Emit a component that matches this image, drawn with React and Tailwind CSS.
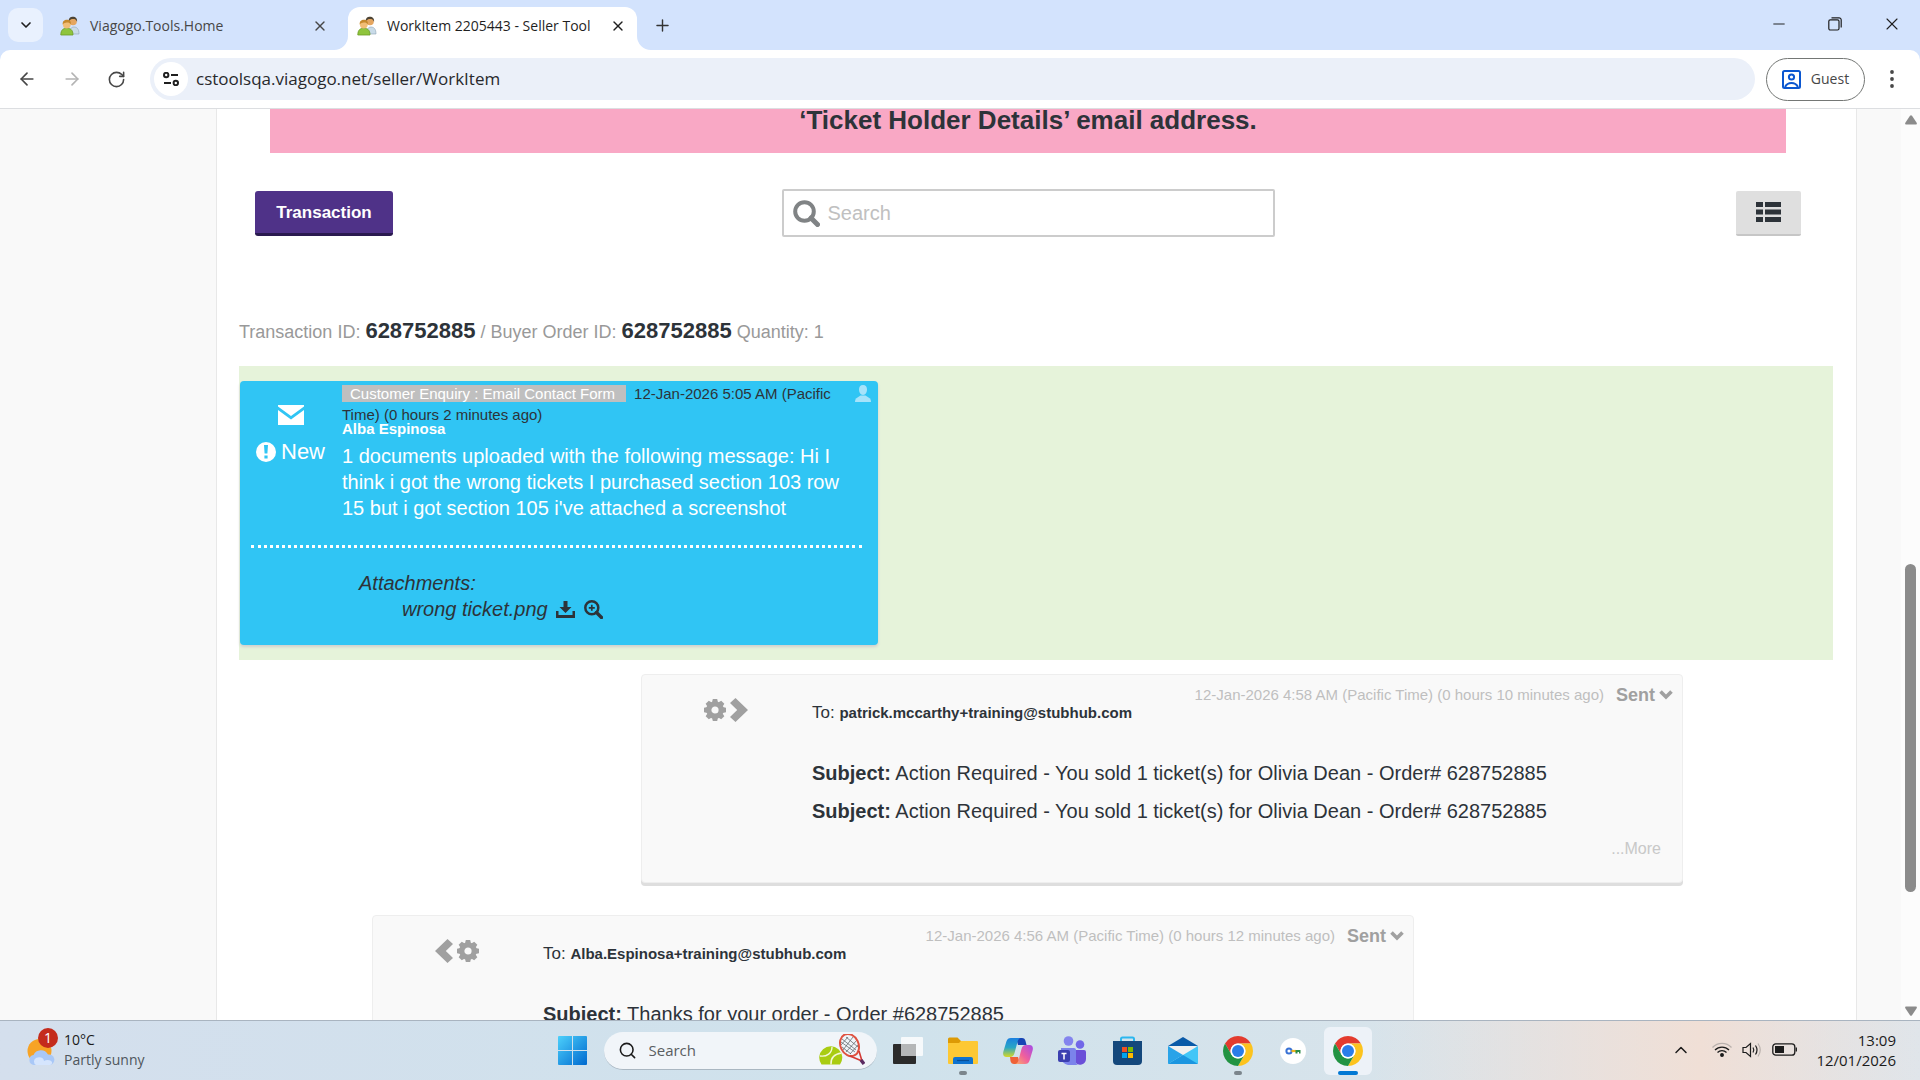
import React from "react";
import { useState } from "react";
import {
  ArrowLeft,
  ArrowRight,
  ChevronDown,
  ChevronUp,
  Minus,
  Plus,
  RotateCw,
  Search,
  X,
} from "lucide-react";

const TEETH = [0, 45, 90, 135, 180, 225, 270, 315];

const PeopleIcon = () => (
  <svg viewBox="0 0 20 20" className="w-5 h-5 shrink-0">
    <path d="M10 18c0-5 1-7 4-7s5 2 5 7z" fill="#c9dbe8" stroke="#8fa5b5" strokeWidth=".6" />
    <circle cx="13" cy="5.5" r="3.8" fill="#e5a660" />
    <path d="M8.8 5.5C8.5 2 10.500 .8 13 .8s4.500 1.500 4.100 5c-1-2.300-2.100-2.800-4-2.800s-2.800.5-4.300 2.500z" fill="#4d4435" />
    <path d="M.8 19c0-5 2.200-6.700 6-6.700s6.200 1.700 6.200 6.700z" fill="#8fc43c" stroke="#6c9c24" strokeWidth=".8" />
    <circle cx="6.800" cy="8.500" r="3.900" fill="#f1bd76" />
    <path d="M2.700 8.500C2.400 5.200 4.200 3.700 7 3.700s4.400 1.800 3.900 4.600c-1.500-1.600-2.600-2-4.200-1.700s-2.700.5-4 1.900z" fill="#c6892d" />
  </svg>
);

const GearIcon = ({ className }) => (
  <svg viewBox="0 0 22 22" className={className} fill="currentColor">
    <circle cx="11" cy="11" r="6.200" fill="none" stroke="currentColor" strokeWidth="5.200" />
    {TEETH.map((angle) => (
      <path key={angle} d="M8 3.500L8.800 0h4.400l.8 3.500z" transform={`rotate(${angle} 11 11)`} />
    ))}
  </svg>
);

const ChevronIcon = ({ left }) => (
  <svg viewBox="0 0 18 24" className="w-[18px] h-6" fill="currentColor">
    {left ? (
      <path d="M12.500 0L0 12l12.500 12 5.500-5L10.800 12 18 5z" />
    ) : (
      <path d="M5.500 0L18 12 5.500 24 0 19l7.200-7L0 5z" />
    )}
  </svg>
);

const ChromeIcon = () => (
  <svg viewBox="2 2 44 44" className="w-[30px] h-[30px]">
    <path d="M24 13H43.050A22 22 0 0 0 4.950 13L14.470 29.500A11 11 0 0 1 24 13z" fill="#e33b2e" />
    <path d="M43.050 13H24A11 11 0 0 1 33.530 29.500L24 46A22 22 0 0 0 43.050 13z" fill="#fcc31e" />
    <path d="M4.950 13L14.470 29.500A11 11 0 0 0 33.530 29.500L24 46A22 22 0 0 1 4.950 13z" fill="#229342" />
    <circle cx="24" cy="24" r="11" fill="#fff" />
    <circle cx="24" cy="24" r="8.800" fill="#2a7de9" />
  </svg>
);

const WindowsIcon = () => (
  <svg viewBox="0 0 29 29" className="w-[29px] h-[29px]">
    <defs>
      <linearGradient id="win" x1="0" y1="0" x2="1" y2="1">
        <stop offset="0" stopColor="#4cd0fb" />
        <stop offset="1" stopColor="#0069cf" />
      </linearGradient>
    </defs>
    <path
      d="M1 0h13v14H0V1a1 1 0 0 1 1-1zM15 0h13a1 1 0 0 1 1 1v13H15zM0 15h14v14H1a1 1 0 0 1-1-1zM15 15h14v13a1 1 0 0 1-1 1H15z"
      fill="url(#win)"
    />
  </svg>
);

const TennisIcon = () => (
  <svg viewBox="0 0 46 32" className="w-[46px] h-8 shrink-0">
    <g stroke="#555b60" strokeWidth=".7">
      <path d="M22 8l14 10M23 5l14 11M27 3l12 10M23 13l9 7M24 16L34 3M27 18L38 6M31 20l8-9M22 11l7-8" />
    </g>
    <ellipse cx="30.500" cy="11" rx="9" ry="11.500" transform="rotate(-25 30.500 11)" fill="none" stroke="#df5240" strokeWidth="2" />
    <path d="M31 22l12 5M40 17l3 10" stroke="#d33a34" strokeWidth="1.600" fill="none" />
    <path d="M42 26l3 4" stroke="#5b2b62" strokeWidth="3.500" />
    <path d="M2.500 30.500a11.500 11.500 0 1 1 18.500 0z" fill="#a9cc12" />
    <path d="M1 22c7 1 12-3 12-9M22.500 19c-7 1-11 5-10.500 11.500" stroke="#f4f8d8" strokeWidth="1.400" fill="none" />
  </svg>
);

const TaskViewIcon = () => (
  <svg viewBox="0 0 30 30" className="w-[30px] h-[30px]">
    <rect x="0" y="8" width="23" height="20" rx="1" fill="#2b2b2b" />
    <rect x="8" y="1" width="22" height="19" rx="1" fill="#fff" fillOpacity=".8" />
    <path d="M8 8h15v12H8z" fill="#b5b7b8" />
  </svg>
);

const FolderIcon = () => (
  <svg viewBox="0 0 30 28" className="w-[30px] h-7">
    <path d="M0 2a1.500 1.500 0 0 1 1.500-1.500h8L13 4v6H0z" fill="#dd9a05" />
    <path d="M0 6h11l2-2h16a1 1 0 0 1 1 1v21a1 1 0 0 1-1 1H1a1 1 0 0 1-1-1z" fill="#fdc834" />
    <path d="M5 27v-5a2 2 0 0 1 2-2h16a2 2 0 0 1 2 2v5z" fill="#0f73d0" />
    <path d="M9 23.500h12" stroke="#084e96" strokeWidth="1.200" />
  </svg>
);

const CopilotIcon = () => (
  <svg viewBox="0 0 30 28" className="w-[30px] h-7">
    <defs>
      <linearGradient id="cpa" x1="0" y1="0" x2="0" y2="1">
        <stop offset="0" stopColor="#1a80e0" />
        <stop offset=".5" stopColor="#29a6c5" />
        <stop offset="1" stopColor="#d8d824" />
      </linearGradient>
      <linearGradient id="cpb" x1="1" y1="0" x2="0" y2="1">
        <stop offset="0" stopColor="#a44be8" />
        <stop offset=".55" stopColor="#f0609c" />
        <stop offset="1" stopColor="#fbb168" />
      </linearGradient>
    </defs>
    <path d="M13 1h6c2 0 3 1 3.500 3l1 4H15z" fill="#1744b4" />
    <path d="M7 20h8l2 7h-6c-2 0-3-1-3.500-3z" fill="#ef6238" />
    <path d="M8 1h10c-2 0-3 2-3.500 4l-3 11c-.7 2.500-2 4-4.500 4H3.500C.5 20-.4 17.500.4 14.500l3-10C4.200 2 5.500 1 8 1z" fill="url(#cpa)" />
    <path d="M22 27H12c2 0 3-2 3.500-4l3-11c.7-2.500 2-4 4.500-4h3.500c3 0 3.900 2.500 3.100 5.500l-3 10C25.800 26 24.500 27 22 27z" fill="url(#cpb)" />
  </svg>
);

const TeamsIcon = () => (
  <svg viewBox="0 0 29 30" className="w-[29px] h-[30px]">
    <circle cx="22" cy="8.500" r="4.300" fill="#7267e8" />
    <circle cx="10.500" cy="5" r="4.800" fill="#8484ee" />
    <path d="M17 14h9a2 2 0 0 1 2 2v7a6 6 0 0 1-11 3z" fill="#6a4fd8" />
    <path d="M3 12h13a2 2 0 0 1 2 2v12a3 3 0 0 0 3 3H10a8 8 0 0 1-7-8z" fill="#7b83eb" />
    <rect x="0" y="14" width="12" height="12" rx="2" fill="#3b3fb0" />
    <path d="M3.500 17.500h5M6 17.500v6" stroke="#fff" strokeWidth="1.500" />
  </svg>
);

const StoreIcon = () => (
  <svg viewBox="0 0 29 30" className="w-[29px] h-[30px]">
    <path d="M8 7V3a1.500 1.500 0 0 1 1.500-1.500h10A1.500 1.500 0 0 1 21 3v4" fill="none" stroke="#2cb7ef" strokeWidth="2" />
    <path d="M0 5h29v20a4 4 0 0 1-4 4H4a4 4 0 0 1-4-4z" fill="#14487c" />
    <path d="M9 11h5v5H9z" fill="#f25022" />
    <path d="M15 11h5v5h-5z" fill="#7fba00" />
    <path d="M9 17h5v5H9z" fill="#00a4ef" />
    <path d="M15 17h5v5h-5z" fill="#ffb900" />
  </svg>
);

const MailIcon = () => (
  <svg viewBox="0 0 30 29" className="w-[30px] h-[29px]">
    <path d="M0 10L15 1l15 9z" fill="#0a5aa8" />
    <path d="M2 10h26v12H2z" fill="#f0f0f0" />
    <path d="M0 10l15 9-15 9z" fill="#28a3e8" />
    <path d="M30 10L0 28h29a1 1 0 0 0 1-1z" fill="#42c6f7" />
    <path d="M0 28l15-9 15 9z" fill="#1b96e0" />
  </svg>
);

const KeyIcon = () => (
  <svg viewBox="0 0 26 26" className="w-[26px] h-[26px]">
    <circle cx="13" cy="13" r="13" fill="#fff" />
    <circle cx="9" cy="13" r="2.600" fill="none" stroke="#3972d5" strokeWidth="2" />
    <path d="M11.500 13H16" stroke="#f0b51f" strokeWidth="2.200" />
    <path d="M15.500 12h5v3.500h-1.500V14h-1.500v1.500h-2z" fill="#2c8c46" />
  </svg>
);

const WeatherIcon = () => (
  <svg viewBox="0 0 28 28" className="w-7 h-7">
    <circle cx="12.500" cy="13" r="12" fill="#f7a325" />
    <path d="M7 27a5 5 0 0 1-.5-9.900A8 8 0 0 1 21 16.500 5.300 5.300 0 0 1 23 27z" fill="#a9c8f7" />
    <path d="M9 27a4 4 0 0 1 0-7c4-2 8 0 8 3 3-2 7-1 8 1 .5 2-1 3-2 3z" fill="#d5e5fd" />
  </svg>
);

const BrowserTab = ({ title, active }) => (
  <div
    className={`relative flex items-center h-[43px] rounded-t-[12px] pl-[9px] pb-1.5 ${
      active ? "w-[289px] bg-white text-[#1f1f1f]" : "w-[288px] text-[#474747]"
    }`}
  >
    {active && (
      <>
        <svg viewBox="0 0 14 14" className="absolute -left-3.5 bottom-0 w-3.5 h-3.5">
          <path d="M14 0v14H0A14 14 0 0 0 14 0z" fill="#fff" />
        </svg>
        <svg viewBox="0 0 14 14" className="absolute -right-3.5 bottom-0 w-3.5 h-3.5">
          <path d="M0 0v14h14A14 14 0 0 1 0 0z" fill="#fff" />
        </svg>
      </>
    )}
    <PeopleIcon />
    <span className="flex-1 ml-[10px] text-sm whitespace-nowrap">{title}</span>
    <button aria-label="Close tab" className="mr-[11px]">
      <X size={16} strokeWidth={2} />
    </button>
  </div>
);

const MessageCard = ({ date, to, subjects, incoming, more, className }) => (
  <article
    className={`w-[1042px] h-[209px] bg-[#f9f9f9] border border-[#eee] rounded shadow-[0_3px_0_#dedede] flex flex-col ${className}`}
  >
    <div className="flex justify-end items-center h-10 pr-[9px] text-[#a0a0a0]">
      <time className="text-[15px] text-[#bfbfbf]">{date}</time>
      <button className="flex items-center ml-3 text-[18px] font-bold">
        Sent
        <svg viewBox="0 0 14 10" className="w-3.5 h-2.5 ml-1">
          <path d="M1.500 1.500L7 7l5.500-5.500" fill="none" stroke="currentColor" strokeWidth="3.600" />
        </svg>
      </button>
    </div>
    <div className="flex flex-1 -mt-5">
      <div className="w-[170px] pl-[62px] pt-[3px] text-[#a0a0a0]">
        <button aria-label="Message options" className="flex items-center gap-1">
          {incoming && <ChevronIcon left />}
          <GearIcon className="w-[22px] h-[22px]" />
          {!incoming && <ChevronIcon />}
        </button>
      </div>
      <div className="pt-1.5">
        <p className="text-[17px] leading-6">
          To: <span className="text-[15px] font-bold">{to}</span>
        </p>
        <div className="mt-[29px]">
          {subjects.map((subject, i) => (
            <p key={i} className="text-[20px] leading-[38px] whitespace-nowrap">
              <b>Subject:</b> {subject}
            </p>
          ))}
        </div>
      </div>
    </div>
    {more && (
      <a href="#more" className="self-end mr-[21px] mb-[21px] text-base leading-6 text-[#c8c8c8]">
        ...More
      </a>
    )}
  </article>
);

const TaskButton = ({ label, running, active, children }) => (
  <button
    aria-label={label}
    className={`relative flex items-center justify-center w-12 h-12 rounded-md ${
      active && "bg-[#edf2f8]"
    }`}
  >
    {children}
    {running && <span className="absolute bottom-0 w-2 h-1 rounded-full bg-[#7b858c]" />}
    {active && <span className="absolute bottom-0 w-5 h-1 rounded-full bg-[#0078d4]" />}
  </button>
);

const App = () => {
  const [url, setUrl] = useState("cstoolsqa.viagogo.net/seller/WorkItem");
  const [query, setQuery] = useState("");

  return (
    <div className="h-screen flex flex-col overflow-hidden bg-white font-['Liberation_Sans',Arial,sans-serif] text-[#2d3339]">
      {/* browser tabs */}
      <header className="bg-[#d3e3fd] font-['Open_Sans',sans-serif]">
        <div className="flex items-end h-[50px] pl-2">
          <button
            aria-label="Search tabs"
            className="flex items-center justify-center w-[35px] h-[34px] mb-2 mr-2 rounded-[10px] bg-[#e9f1fe] text-[#1f1f1f]"
          >
            <ChevronDown size={16} strokeWidth={2.500} />
          </button>
          <div className="flex-1 flex items-end">
            <BrowserTab title="Viagogo.Tools.Home" />
            <div className="ml-[9px]">
              <BrowserTab title="WorkItem 2205443 - Seller Tool" active />
            </div>
            <button aria-label="New tab" className="ml-4 mb-[15px] text-[#333]">
              <Plus size={19} strokeWidth={1.800} />
            </button>
          </div>
          <div className="flex items-center gap-10 pr-[18px] mb-4 text-[#1f1f1f]">
            <button aria-label="Minimize">
              <Minus size={18} strokeWidth={1.300} />
            </button>
            <button aria-label="Restore">
              <svg viewBox="0 0 14 14" className="w-3.5 h-3.5" fill="none" stroke="currentColor" strokeWidth="1.200">
                <rect x=".8" y="2.800" width="10.200" height="10.200" rx="1.500" />
                <path d="M3.500.8h7.500a2.200 2.200 0 0 1 2.200 2.200v7.500" />
              </svg>
            </button>
            <button aria-label="Close">
              <X size={20} strokeWidth={1.300} />
            </button>
          </div>
        </div>
        {/* address bar */}
        <div className="flex items-center h-[59px] rounded-t-[10px] bg-white border-b border-[#dcdee1] text-[#474747]">
          <div className="flex items-center gap-[25px] pl-[17px]">
            <button aria-label="Back">
              <ArrowLeft size={20} strokeWidth={2} />
            </button>
            <button aria-label="Forward" className="text-[#b4b4b4]">
              <ArrowRight size={20} strokeWidth={2} />
            </button>
            <button aria-label="Reload">
              <RotateCw size={19} strokeWidth={2} />
            </button>
          </div>
          <div className="flex-1 flex items-center h-[42px] ml-6 rounded-full bg-[#ebf0f9]">
            <button
              aria-label="Site information"
              className="flex items-center justify-center w-[34px] h-[34px] ml-1 rounded-full bg-white text-[#1f1f1f]"
            >
              <svg viewBox="0 0 16 14" className="w-4 h-3.5" fill="none" stroke="currentColor" strokeWidth="2">
                <circle cx="3.200" cy="3" r="2.200" />
                <path d="M8 3h7M1 11h7" />
                <circle cx="12.800" cy="11" r="2.200" />
              </svg>
            </button>
            <label htmlFor="url" className="sr-only">
              Address
            </label>
            <input
              type="text"
              id="url"
              value={url}
              onChange={(e) => setUrl(e.target.value)}
              className="flex-1 ml-2 bg-transparent text-[17px] text-[#28292c] outline-none"
            />
          </div>
          <button className="flex items-center justify-center w-[99px] h-[43px] ml-[11px] border border-[#747775] rounded-full text-sm gap-2.5">
            <svg viewBox="0 0 19 19" className="w-[19px] h-[19px]" fill="none" stroke="#0b57d0" strokeWidth="2">
              <rect x="1" y="1" width="17" height="17" rx="1.500" />
              <circle cx="9.500" cy="7" r="2.600" />
              <path d="M3 17c1.500-3 3.500-4 6.500-4s5 1 6.500 4" />
            </svg>
            Guest
          </button>
          <button aria-label="Menu" className="ml-[25px] mr-[26px]">
            <svg viewBox="0 0 4 18" className="w-1 h-[18px]" fill="currentColor">
              <circle cx="2" cy="2" r="1.900" />
              <circle cx="2" cy="9" r="1.900" />
              <circle cx="2" cy="16" r="1.900" />
            </svg>
          </button>
        </div>
      </header>

      {/* page */}
      <div className="flex-1 min-h-0 flex bg-[#f9f9f9]">
        <main className="flex-1 ml-[216px] mr-11 pl-[22px] pr-[23px] bg-white border-x border-[#e8e8e8] overflow-hidden">
          <div className="mx-[31px] mr-[47px] h-11 bg-[#f9a8c5] text-center">
            <h1 className="text-[26px] leading-[22px] font-bold">‘Ticket Holder Details’ email address.</h1>
          </div>

          <div className="flex items-center justify-between mt-9 pl-4 pr-8 h-12">
            <button className="w-[138px] h-[45px] pt-0.5 rounded-[3px] bg-[#4f3288] border-b-3 border-[#2a1a4f] text-[17px] font-bold text-white">
              Transaction
            </button>
            <div className="flex items-center w-[493px] h-12 px-[9px] border-2 border-[#ccc] rounded-xs mr-[73px]">
              <svg viewBox="0 0 27 27" className="w-[27px] h-[27px]" fill="none" stroke="#808385">
                <circle cx="11.500" cy="11.500" r="9.300" strokeWidth="4" />
                <path d="M18 18l6.500 6.500" strokeWidth="5" strokeLinecap="round" />
              </svg>
              <label htmlFor="search" className="sr-only">
                Search
              </label>
              <input
                type="text"
                id="search"
                value={query}
                onChange={(e) => setQuery(e.target.value)}
                placeholder="Search"
                className="flex-1 ml-2 text-[20px] placeholder:text-[#c0c0c0] outline-none"
              />
            </div>
            <button
              aria-label="List view"
              className="flex items-center justify-center w-[65px] h-[45px] rounded-xs bg-[#dfdfdf] border-b-2 border-[#c6c6c6]"
            >
              <svg viewBox="0 0 25 20" className="w-[25px] h-5" fill="currentColor">
                <path d="M0 0h7v5H0zM9 0h16v5H9zM0 7.500h7v5H0zM9 7.500h16v5H9zM0 15h7v5H0zM9 15h16v5H9z" />
              </svg>
            </button>
          </div>

          <p className="mt-20 text-[18px] leading-7 text-[#999]">
            Transaction ID: <b className="text-[22px] text-[#2d3339]">628752885</b> / Buyer Order ID:{" "}
            <b className="text-[22px] text-[#2d3339]">628752885</b> Quantity: 1
          </p>

          <section className="mt-5 py-[15px] bg-[#e6f3da]">
            <article className="w-2/5 h-[264px] ml-px rounded bg-[#30c5f4] shadow-[0_2px_3px_#cfd0cf]">
              <div className="flex pt-1">
                <div className="w-[102px] pt-5 text-white">
                  <svg viewBox="0 0 26 20" className="w-[26px] h-5 mx-auto" fill="currentColor">
                    <path d="M0 0h26v1.500L13 11 0 1.500zM0 5l13 9.500L26 5v15H0z" />
                  </svg>
                  <div className="flex items-center mt-[13px] pl-4 gap-[5px] text-[22px] leading-7">
                    <svg viewBox="0 0 20 20" className="w-5 h-5" fill="currentColor">
                      <circle cx="10" cy="10" r="10" />
                      <path d="M8 3h4l-.6 8.500H8.600zM8.400 13.500h3.200v3H8.400z" fill="#30c5f4" />
                    </svg>
                    New
                  </div>
                </div>
                <div className="flex-1">
                  <div className="w-[510px] text-[15px] leading-[21px] -mt-0.5">
                    <span className="pl-2 pr-[11px] mr-2 bg-[#bfbfbf] text-white">
                      Customer Enquiry : Email Contact Form
                    </span>
                    12-Jan-2026 5:05 AM (Pacific Time) (0 hours 2 minutes ago)
                  </div>
                  <h2 className="-mt-1 text-[15px] leading-4 font-bold text-white">Alba Espinosa</h2>
                  <p className="mt-1.5 w-[510px] text-[20px] leading-[26px] text-white">
                    1 documents uploaded with the following message: Hi I think i got the wrong tickets I
                    purchased section 103 row 15 but i got section 105 i've attached a screenshot
                  </p>
                </div>
                <svg viewBox="0 0 16 17" className="w-4 h-[17px] mr-[7px]" fill="#a6e3fa">
                  <path d="M8 0c2.800 0 4 1.800 4 4.500S10.500 10 8 10 4 7.200 4 4.500 5.200 0 8 0z" />
                  <path d="M5.500 10.500h5L15 13.500q1 1 1 3.500H0q0-2.500 1-3.500z" />
                </svg>
              </div>
              <hr className="mt-6 ml-[11px] mr-4 border-t-3 border-dotted border-white" />
              <div className="mt-[22px] pl-[119px] text-[20px] leading-[26px] italic">
                <p>Attachments:</p>
                <div className="flex items-center pl-[43px]">
                  wrong ticket.png
                  <button aria-label="Download" className="ml-2">
                    <svg viewBox="0 0 19 17" className="w-[19px] h-[17px]" fill="currentColor">
                      <path d="M7.500 0h4v6h4l-6 6-6-6h4z" />
                      <path d="M0 10h2.500v4h14v-4H19v7H0z" />
                    </svg>
                  </button>
                  <button aria-label="Zoom in" className="ml-[9px]">
                    <svg viewBox="0 0 19 19" className="w-[19px] h-[19px]" fill="none" stroke="currentColor">
                      <circle cx="7.800" cy="7.800" r="6.500" strokeWidth="2.500" />
                      <path d="M12.500 12.500l5 5" strokeWidth="3.400" strokeLinecap="round" />
                      <path d="M7.800 4.800v6M4.800 7.800h6" strokeWidth="1.700" />
                    </svg>
                  </button>
                </div>
              </div>
            </article>
          </section>

          <MessageCard
            className="mt-3.5 ml-auto mr-[150px]"
            date="12-Jan-2026 4:58 AM (Pacific Time) (0 hours 10 minutes ago)"
            to="patrick.mccarthy+training@stubhub.com"
            subjects={[
              "Action Required - You sold 1 ticket(s) for Olivia Dean - Order# 628752885",
              "Action Required - You sold 1 ticket(s) for Olivia Dean - Order# 628752885",
            ]}
            more
          />
          <MessageCard
            className="mt-8 ml-[133px]"
            date="12-Jan-2026 4:56 AM (Pacific Time) (0 hours 12 minutes ago)"
            to="Alba.Espinosa+training@stubhub.com"
            subjects={["Thanks for your order - Order #628752885"]}
            incoming
          />
        </main>

        {/* scrollbar */}
        <div className="flex flex-col items-center w-[19px] pt-1.5 pb-1 bg-[#fcfcfc]">
          <svg viewBox="0 0 12 10" className="w-3 h-2.5" fill="#8b8b8b">
            <path d="M5 .8q1-1 2 0l4.500 6.700Q12.500 9.500 11 9.500H1Q-.5 9.500.5 7.500z" />
          </svg>
          <div className="w-[11px] h-[328px] mt-auto rounded-full bg-[#8b8b8b]" />
          <svg viewBox="0 0 12 10" className="w-3 h-2.5 mt-[114px]" fill="#8b8b8b">
            <path d="M5 9.200q1 1 2 0l4.500-6.700Q12.500.5 11 .5H1Q-.5.5.5 2.500z" />
          </svg>
        </div>
      </div>

      {/* taskbar */}
      <footer className="grid grid-cols-[1fr_auto_1fr] items-center h-[60px] border-t border-[#a9b4c0] bg-linear-to-r from-[#d4dfed] via-[#cfe2ec] via-45% to-[#e0e5ea] font-['Open_Sans',sans-serif] text-[#1b1b1b]">
        <div className="flex items-center pl-[27px] pb-0.5">
          <div className="relative pt-1">
            <WeatherIcon />
            <span className="absolute -top-1.5 left-[11px] w-5 h-5 rounded-full bg-[#c42b1c] text-center text-white text-sm leading-5">
              1
            </span>
          </div>
          <div className="ml-[9px] text-sm leading-5">
            <p>10°C</p>
            <p className="text-[#4f565c]">Partly sunny</p>
          </div>
        </div>
        <div className="flex items-center gap-[7px]">
          <button aria-label="Start" className="flex items-center justify-center w-12 h-12">
            <WindowsIcon />
          </button>
          <div className="flex items-center w-[273px] h-[38px] pl-3.5 pr-3 rounded-full bg-[#f1f5f9] border-b border-[#aab7c2]">
            <Search size={19} strokeWidth={2} />
            <label htmlFor="taskbar-search" className="sr-only">
              Search
            </label>
            <input
              type="text"
              id="taskbar-search"
              placeholder="Search"
              className="flex-1 min-w-0 ml-3 bg-transparent text-[15px] placeholder:text-[#5a5e61] outline-none"
            />
            <TennisIcon />
          </div>
          <TaskButton label="Task view">
            <TaskViewIcon />
          </TaskButton>
          <TaskButton label="File Explorer" running>
            <FolderIcon />
          </TaskButton>
          <TaskButton label="Copilot">
            <CopilotIcon />
          </TaskButton>
          <TaskButton label="Teams">
            <TeamsIcon />
          </TaskButton>
          <TaskButton label="Microsoft Store">
            <StoreIcon />
          </TaskButton>
          <TaskButton label="Mail">
            <MailIcon />
          </TaskButton>
          <TaskButton label="Chrome" running>
            <ChromeIcon />
          </TaskButton>
          <TaskButton label="Passwords">
            <KeyIcon />
          </TaskButton>
          <TaskButton label="Chrome" active>
            <ChromeIcon />
          </TaskButton>
        </div>
        <div className="flex items-center justify-end h-full pr-6 pb-0.5 bg-linear-to-r from-transparent via-[#f0dfd6] via-60% to-transparent">
          <button aria-label="Show hidden icons" className="mr-[21px]">
            <ChevronUp size={20} strokeWidth={1.800} />
          </button>
          <svg viewBox="0 0 20 15" className="w-5 h-[15px] mr-2.5" fill="none" stroke="currentColor" strokeWidth="1.300">
            <path d="M.5 5.500a13 13 0 0 1 19 0" stroke="#b9b1ad" />
            <path d="M3 8a9.800 9.800 0 0 1 14 0M5.500 10.500a6.300 6.300 0 0 1 9 0" />
            <circle cx="10" cy="13" r="1.300" fill="currentColor" />
          </svg>
          <svg viewBox="0 0 20 16" className="w-5 h-4 mr-2.5" fill="none" stroke="currentColor" strokeWidth="1.200">
            <path d="M1 5.500h3L8.500 1.500v13L4 10.500H1z" />
            <path d="M11 5.500q1.600 2.500 0 5M13.500 3.500q3 4.500 0 9" />
            <path d="M16 1.500q4.500 6.500 0 13" stroke="#b9b1ad" />
          </svg>
          <svg viewBox="0 0 25 13" className="w-[25px] h-[13px]" fill="none" stroke="currentColor" strokeWidth="1.300">
            <rect x=".8" y=".8" width="22" height="11.400" rx="3" />
            <rect x="3" y="3" width="9" height="7" fill="currentColor" stroke="none" />
            <path d="M24.300 4.500v4" />
          </svg>
          <div className="ml-[19px] text-right text-[15px] leading-5">
            <p>13:09</p>
            <p>12/01/2026</p>
          </div>
        </div>
      </footer>
    </div>
  );
};

export default App;
